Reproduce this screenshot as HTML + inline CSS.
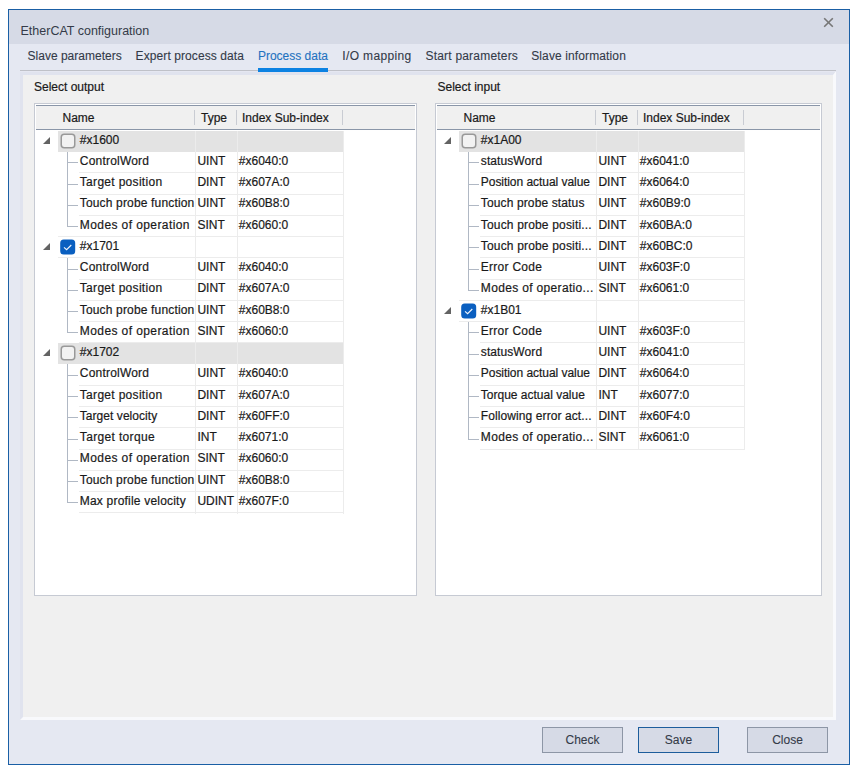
<!DOCTYPE html>
<html><head><meta charset="utf-8"><style>
html,body{margin:0;padding:0;width:860px;height:771px;overflow:hidden;background:#fff}
body{position:relative;font-family:"Liberation Sans", sans-serif}
div{position:absolute}
.t{white-space:nowrap;line-height:16px;-webkit-text-stroke:0.2px currentColor}
svg{display:block}
</style></head><body>
<div style="left:8px;top:9px;width:842px;height:756px;background:#e5e8f2;box-sizing:border-box;border:1px solid #1a5fa5"></div>
<div style="left:9px;top:10px;width:840px;height:34px;background:#d6dae6"></div>
<div class="t" style="left:20.5px;top:22.5px;font-size:12.5px;color:#343a48;-webkit-text-stroke:0">EtherCAT configuration</div>
<svg style="position:absolute;left:822px;top:16px" width="13" height="13" viewBox="0 0 13 13"><path d="M2.2 2.2L10.8 10.8M10.8 2.2L2.2 10.8" stroke="#767676" stroke-width="1.6" fill="none"/></svg>
<div class="t" style="left:27.6px;top:47.6px;font-size:12px;color:#333a48;letter-spacing:0px;-webkit-text-stroke:0.1px currentColor">Slave parameters</div>
<div class="t" style="left:135.6px;top:47.6px;font-size:12px;color:#333a48;letter-spacing:0.09px;-webkit-text-stroke:0.1px currentColor">Expert process data</div>
<div class="t" style="left:257.9px;top:47.6px;font-size:12px;color:#1f72c0;letter-spacing:0px;-webkit-text-stroke:0.1px currentColor">Process data</div>
<div class="t" style="left:342.3px;top:47.6px;font-size:12px;color:#333a48;letter-spacing:0.35px;-webkit-text-stroke:0.1px currentColor">I/O mapping</div>
<div class="t" style="left:425.5px;top:47.6px;font-size:12px;color:#333a48;letter-spacing:0.2px;-webkit-text-stroke:0.1px currentColor">Start parameters</div>
<div class="t" style="left:531.2px;top:47.6px;font-size:12px;color:#333a48;letter-spacing:0.12px;-webkit-text-stroke:0.1px currentColor">Slave information</div>
<div style="left:20px;top:70px;width:816px;height:1px;background:#bfc1c8"></div>
<div style="left:20px;top:71px;width:816px;height:649px;box-sizing:border-box;background:#f0f0f0;border-style:solid;border-width:4px 3px 3px 3px;border-color:#e0e3ee #f8f9fc #f8f9fc #e0e3ee"></div>
<div style="left:20px;top:71px;width:816px;height:1px;background:#e5e7f1"></div>
<div style="left:258px;top:68px;width:70px;height:4px;background:#0c82e2"></div>
<div class="t" style="left:34px;top:79.2px;font-size:12px;color:#1a1a1a;">Select output</div>
<div style="left:34px;top:103px;width:383px;height:493px;box-sizing:border-box;border:1px solid #c6cad3;background:#fff"></div>
<div style="left:36px;top:105px;width:379px;height:1px;background:#8a96a8"></div>
<div style="left:36px;top:106px;width:379px;height:23px;background:#f0f0f0"></div>
<div style="left:36px;top:129px;width:379px;height:1px;background:#8a96a8"></div>
<div style="left:194px;top:110px;width:1px;height:15px;background:#c9ccd3"></div>
<div style="left:236px;top:110px;width:1px;height:15px;background:#c9ccd3"></div>
<div style="left:342px;top:110px;width:1px;height:15px;background:#c9ccd3"></div>
<div class="t" style="left:62.5px;top:109.6px;font-size:12px;color:#1a1a1a;">Name</div>
<div class="t" style="left:201px;top:109.6px;font-size:12px;color:#1a1a1a;">Type</div>
<div class="t" style="left:242px;top:109.6px;font-size:12px;color:#1a1a1a;">Index Sub-index</div>
<div style="left:58px;top:130.5px;width:286px;height:21px;background:#e3e3e3"></div>
<svg style="position:absolute;left:43px;top:136.5px" width="8" height="8" viewBox="0 0 8 8"><path d="M0 7L7 0L7 7Z" fill="#636363"/></svg>
<svg style="position:absolute;left:60px;top:132.5px" width="16" height="16" viewBox="0 0 16 16"><rect x="1.25" y="1.25" width="13.5" height="13.5" rx="3" fill="#f2f2f2" stroke="#999" stroke-width="1.5"/></svg>
<div class="t" style="left:79.8px;top:131.5px;font-size:12px;color:#1a1a1a;">#x1600</div>
<div style="left:79px;top:172.25px;width:265px;height:1px;background:#ececec"></div>
<div style="left:68px;top:162.25px;width:10px;height:1px;background:#b0b8c4"></div>
<div class="t" style="left:79.8px;top:152.75px;font-size:12px;color:#1a1a1a;letter-spacing:0.2px">ControlWord</div>
<div class="t" style="left:197.4px;top:152.75px;font-size:12px;color:#1a1a1a;">UINT</div>
<div class="t" style="left:238.8px;top:152.75px;font-size:12px;color:#1a1a1a;">#x6040:0</div>
<div style="left:79px;top:193.5px;width:265px;height:1px;background:#ececec"></div>
<div style="left:68px;top:183.5px;width:10px;height:1px;background:#b0b8c4"></div>
<div class="t" style="left:79.8px;top:174.0px;font-size:12px;color:#1a1a1a;letter-spacing:0.307px">Target position</div>
<div class="t" style="left:197.4px;top:174.0px;font-size:12px;color:#1a1a1a;">DINT</div>
<div class="t" style="left:238.8px;top:174.0px;font-size:12px;color:#1a1a1a;">#x607A:0</div>
<div style="left:79px;top:214.75px;width:265px;height:1px;background:#ececec"></div>
<div style="left:68px;top:204.75px;width:10px;height:1px;background:#b0b8c4"></div>
<div class="t" style="left:79.8px;top:195.25px;font-size:12px;color:#1a1a1a;letter-spacing:0.158px">Touch probe function</div>
<div class="t" style="left:197.4px;top:195.25px;font-size:12px;color:#1a1a1a;">UINT</div>
<div class="t" style="left:238.8px;top:195.25px;font-size:12px;color:#1a1a1a;">#x60B8:0</div>
<div style="left:79px;top:236.0px;width:265px;height:1px;background:#ececec"></div>
<div style="left:68px;top:226.0px;width:10px;height:1px;background:#b0b8c4"></div>
<div class="t" style="left:79.8px;top:216.5px;font-size:12px;color:#1a1a1a;letter-spacing:0.412px">Modes of operation</div>
<div class="t" style="left:197.4px;top:216.5px;font-size:12px;color:#1a1a1a;">SINT</div>
<div class="t" style="left:238.8px;top:216.5px;font-size:12px;color:#1a1a1a;">#x6060:0</div>
<div style="left:58px;top:236.25px;width:286px;height:1px;background:#ececec"></div>
<div style="left:58px;top:257.25px;width:286px;height:1px;background:#ececec"></div>
<svg style="position:absolute;left:43px;top:242.75px" width="8" height="8" viewBox="0 0 8 8"><path d="M0 7L7 0L7 7Z" fill="#636363"/></svg>
<svg style="position:absolute;left:60px;top:238.75px" width="16" height="16" viewBox="0 0 16 16"><rect x="0.2" y="0.5" width="15" height="15" rx="3.5" fill="#0a5fc0"/><path d="M4 8.4L6.6 10.7L11.3 6" stroke="#f2f6fc" stroke-width="1.1" fill="none"/></svg>
<div class="t" style="left:79.8px;top:237.75px;font-size:12px;color:#1a1a1a;">#x1701</div>
<div style="left:79px;top:278.5px;width:265px;height:1px;background:#ececec"></div>
<div style="left:68px;top:268.5px;width:10px;height:1px;background:#b0b8c4"></div>
<div class="t" style="left:79.8px;top:259.0px;font-size:12px;color:#1a1a1a;letter-spacing:0.2px">ControlWord</div>
<div class="t" style="left:197.4px;top:259.0px;font-size:12px;color:#1a1a1a;">UINT</div>
<div class="t" style="left:238.8px;top:259.0px;font-size:12px;color:#1a1a1a;">#x6040:0</div>
<div style="left:79px;top:299.75px;width:265px;height:1px;background:#ececec"></div>
<div style="left:68px;top:289.75px;width:10px;height:1px;background:#b0b8c4"></div>
<div class="t" style="left:79.8px;top:280.25px;font-size:12px;color:#1a1a1a;letter-spacing:0.307px">Target position</div>
<div class="t" style="left:197.4px;top:280.25px;font-size:12px;color:#1a1a1a;">DINT</div>
<div class="t" style="left:238.8px;top:280.25px;font-size:12px;color:#1a1a1a;">#x607A:0</div>
<div style="left:79px;top:321.0px;width:265px;height:1px;background:#ececec"></div>
<div style="left:68px;top:311.0px;width:10px;height:1px;background:#b0b8c4"></div>
<div class="t" style="left:79.8px;top:301.5px;font-size:12px;color:#1a1a1a;letter-spacing:0.158px">Touch probe function</div>
<div class="t" style="left:197.4px;top:301.5px;font-size:12px;color:#1a1a1a;">UINT</div>
<div class="t" style="left:238.8px;top:301.5px;font-size:12px;color:#1a1a1a;">#x60B8:0</div>
<div style="left:79px;top:342.25px;width:265px;height:1px;background:#ececec"></div>
<div style="left:68px;top:332.25px;width:10px;height:1px;background:#b0b8c4"></div>
<div class="t" style="left:79.8px;top:322.75px;font-size:12px;color:#1a1a1a;letter-spacing:0.412px">Modes of operation</div>
<div class="t" style="left:197.4px;top:322.75px;font-size:12px;color:#1a1a1a;">SINT</div>
<div class="t" style="left:238.8px;top:322.75px;font-size:12px;color:#1a1a1a;">#x6060:0</div>
<div style="left:58px;top:343.0px;width:286px;height:21px;background:#e3e3e3"></div>
<svg style="position:absolute;left:43px;top:349.0px" width="8" height="8" viewBox="0 0 8 8"><path d="M0 7L7 0L7 7Z" fill="#636363"/></svg>
<svg style="position:absolute;left:60px;top:345.0px" width="16" height="16" viewBox="0 0 16 16"><rect x="1.25" y="1.25" width="13.5" height="13.5" rx="3" fill="#f2f2f2" stroke="#999" stroke-width="1.5"/></svg>
<div class="t" style="left:79.8px;top:344.0px;font-size:12px;color:#1a1a1a;">#x1702</div>
<div style="left:79px;top:384.75px;width:265px;height:1px;background:#ececec"></div>
<div style="left:68px;top:374.75px;width:10px;height:1px;background:#b0b8c4"></div>
<div class="t" style="left:79.8px;top:365.25px;font-size:12px;color:#1a1a1a;letter-spacing:0.2px">ControlWord</div>
<div class="t" style="left:197.4px;top:365.25px;font-size:12px;color:#1a1a1a;">UINT</div>
<div class="t" style="left:238.8px;top:365.25px;font-size:12px;color:#1a1a1a;">#x6040:0</div>
<div style="left:79px;top:406.0px;width:265px;height:1px;background:#ececec"></div>
<div style="left:68px;top:396.0px;width:10px;height:1px;background:#b0b8c4"></div>
<div class="t" style="left:79.8px;top:386.5px;font-size:12px;color:#1a1a1a;letter-spacing:0.307px">Target position</div>
<div class="t" style="left:197.4px;top:386.5px;font-size:12px;color:#1a1a1a;">DINT</div>
<div class="t" style="left:238.8px;top:386.5px;font-size:12px;color:#1a1a1a;">#x607A:0</div>
<div style="left:79px;top:427.25px;width:265px;height:1px;background:#ececec"></div>
<div style="left:68px;top:417.25px;width:10px;height:1px;background:#b0b8c4"></div>
<div class="t" style="left:79.8px;top:407.75px;font-size:12px;color:#1a1a1a;letter-spacing:0.05px">Target velocity</div>
<div class="t" style="left:197.4px;top:407.75px;font-size:12px;color:#1a1a1a;">DINT</div>
<div class="t" style="left:238.8px;top:407.75px;font-size:12px;color:#1a1a1a;">#x60FF:0</div>
<div style="left:79px;top:448.5px;width:265px;height:1px;background:#ececec"></div>
<div style="left:68px;top:438.5px;width:10px;height:1px;background:#b0b8c4"></div>
<div class="t" style="left:79.8px;top:429.0px;font-size:12px;color:#1a1a1a;letter-spacing:0.342px">Target torque</div>
<div class="t" style="left:197.4px;top:429.0px;font-size:12px;color:#1a1a1a;">INT</div>
<div class="t" style="left:238.8px;top:429.0px;font-size:12px;color:#1a1a1a;">#x6071:0</div>
<div style="left:79px;top:469.75px;width:265px;height:1px;background:#ececec"></div>
<div style="left:68px;top:459.75px;width:10px;height:1px;background:#b0b8c4"></div>
<div class="t" style="left:79.8px;top:450.25px;font-size:12px;color:#1a1a1a;letter-spacing:0.412px">Modes of operation</div>
<div class="t" style="left:197.4px;top:450.25px;font-size:12px;color:#1a1a1a;">SINT</div>
<div class="t" style="left:238.8px;top:450.25px;font-size:12px;color:#1a1a1a;">#x6060:0</div>
<div style="left:79px;top:491.0px;width:265px;height:1px;background:#ececec"></div>
<div style="left:68px;top:481.0px;width:10px;height:1px;background:#b0b8c4"></div>
<div class="t" style="left:79.8px;top:471.5px;font-size:12px;color:#1a1a1a;letter-spacing:0.158px">Touch probe function</div>
<div class="t" style="left:197.4px;top:471.5px;font-size:12px;color:#1a1a1a;">UINT</div>
<div class="t" style="left:238.8px;top:471.5px;font-size:12px;color:#1a1a1a;">#x60B8:0</div>
<div style="left:79px;top:512.25px;width:265px;height:1px;background:#ececec"></div>
<div style="left:68px;top:502.25px;width:10px;height:1px;background:#b0b8c4"></div>
<div class="t" style="left:79.8px;top:492.75px;font-size:12px;color:#1a1a1a;letter-spacing:0.2px">Max profile velocity</div>
<div class="t" style="left:197.4px;top:492.75px;font-size:12px;color:#1a1a1a;">UDINT</div>
<div class="t" style="left:238.8px;top:492.75px;font-size:12px;color:#1a1a1a;">#x607F:0</div>
<div style="left:195px;top:131px;width:1px;height:382.5px;background:#ececec"></div>
<div style="left:237px;top:131px;width:1px;height:382.5px;background:#ececec"></div>
<div style="left:343px;top:131px;width:1px;height:382.5px;background:#ececec"></div>
<div style="left:67px;top:151.75px;width:1px;height:75.25px;background:#b0b8c4"></div>
<div style="left:67px;top:258.0px;width:1px;height:75.25px;background:#b0b8c4"></div>
<div style="left:67px;top:364.25px;width:1px;height:139.0px;background:#b0b8c4"></div>
<div class="t" style="left:437.5px;top:79.2px;font-size:12px;color:#1a1a1a;">Select input</div>
<div style="left:435px;top:103px;width:387px;height:493px;box-sizing:border-box;border:1px solid #c6cad3;background:#fff"></div>
<div style="left:437px;top:105px;width:383px;height:1px;background:#8a96a8"></div>
<div style="left:437px;top:106px;width:383px;height:23px;background:#f0f0f0"></div>
<div style="left:437px;top:129px;width:383px;height:1px;background:#8a96a8"></div>
<div style="left:595px;top:110px;width:1px;height:15px;background:#c9ccd3"></div>
<div style="left:637px;top:110px;width:1px;height:15px;background:#c9ccd3"></div>
<div style="left:743px;top:110px;width:1px;height:15px;background:#c9ccd3"></div>
<div class="t" style="left:463.5px;top:109.6px;font-size:12px;color:#1a1a1a;">Name</div>
<div class="t" style="left:602px;top:109.6px;font-size:12px;color:#1a1a1a;">Type</div>
<div class="t" style="left:643px;top:109.6px;font-size:12px;color:#1a1a1a;">Index Sub-index</div>
<div style="left:459px;top:130.5px;width:286px;height:21px;background:#e3e3e3"></div>
<svg style="position:absolute;left:444px;top:136.5px" width="8" height="8" viewBox="0 0 8 8"><path d="M0 7L7 0L7 7Z" fill="#636363"/></svg>
<svg style="position:absolute;left:461px;top:132.5px" width="16" height="16" viewBox="0 0 16 16"><rect x="1.25" y="1.25" width="13.5" height="13.5" rx="3" fill="#f2f2f2" stroke="#999" stroke-width="1.5"/></svg>
<div class="t" style="left:480.8px;top:131.5px;font-size:12px;color:#1a1a1a;">#x1A00</div>
<div style="left:480px;top:172.25px;width:265px;height:1px;background:#ececec"></div>
<div style="left:469px;top:162.25px;width:10px;height:1px;background:#b0b8c4"></div>
<div class="t" style="left:480.8px;top:152.75px;font-size:12px;color:#1a1a1a;letter-spacing:0.089px">statusWord</div>
<div class="t" style="left:598.4px;top:152.75px;font-size:12px;color:#1a1a1a;">UINT</div>
<div class="t" style="left:639.8px;top:152.75px;font-size:12px;color:#1a1a1a;">#x6041:0</div>
<div style="left:480px;top:193.5px;width:265px;height:1px;background:#ececec"></div>
<div style="left:469px;top:183.5px;width:10px;height:1px;background:#b0b8c4"></div>
<div class="t" style="left:480.8px;top:174.0px;font-size:12px;color:#1a1a1a;letter-spacing:-0.045px">Position actual value</div>
<div class="t" style="left:598.4px;top:174.0px;font-size:12px;color:#1a1a1a;">DINT</div>
<div class="t" style="left:639.8px;top:174.0px;font-size:12px;color:#1a1a1a;">#x6064:0</div>
<div style="left:480px;top:214.75px;width:265px;height:1px;background:#ececec"></div>
<div style="left:469px;top:204.75px;width:10px;height:1px;background:#b0b8c4"></div>
<div class="t" style="left:480.8px;top:195.25px;font-size:12px;color:#1a1a1a;letter-spacing:0.129px">Touch probe status</div>
<div class="t" style="left:598.4px;top:195.25px;font-size:12px;color:#1a1a1a;">UINT</div>
<div class="t" style="left:639.8px;top:195.25px;font-size:12px;color:#1a1a1a;">#x60B9:0</div>
<div style="left:480px;top:236.0px;width:265px;height:1px;background:#ececec"></div>
<div style="left:469px;top:226.0px;width:10px;height:1px;background:#b0b8c4"></div>
<div class="t" style="left:480.8px;top:216.5px;font-size:12px;color:#1a1a1a;letter-spacing:0.17px">Touch probe positi...</div>
<div class="t" style="left:598.4px;top:216.5px;font-size:12px;color:#1a1a1a;">DINT</div>
<div class="t" style="left:639.8px;top:216.5px;font-size:12px;color:#1a1a1a;">#x60BA:0</div>
<div style="left:480px;top:257.25px;width:265px;height:1px;background:#ececec"></div>
<div style="left:469px;top:247.25px;width:10px;height:1px;background:#b0b8c4"></div>
<div class="t" style="left:480.8px;top:237.75px;font-size:12px;color:#1a1a1a;letter-spacing:0.17px">Touch probe positi...</div>
<div class="t" style="left:598.4px;top:237.75px;font-size:12px;color:#1a1a1a;">DINT</div>
<div class="t" style="left:639.8px;top:237.75px;font-size:12px;color:#1a1a1a;">#x60BC:0</div>
<div style="left:480px;top:278.5px;width:265px;height:1px;background:#ececec"></div>
<div style="left:469px;top:268.5px;width:10px;height:1px;background:#b0b8c4"></div>
<div class="t" style="left:480.8px;top:259.0px;font-size:12px;color:#1a1a1a;letter-spacing:0.267px">Error Code</div>
<div class="t" style="left:598.4px;top:259.0px;font-size:12px;color:#1a1a1a;">UINT</div>
<div class="t" style="left:639.8px;top:259.0px;font-size:12px;color:#1a1a1a;">#x603F:0</div>
<div style="left:480px;top:299.75px;width:265px;height:1px;background:#ececec"></div>
<div style="left:469px;top:289.75px;width:10px;height:1px;background:#b0b8c4"></div>
<div class="t" style="left:480.8px;top:280.25px;font-size:12px;color:#1a1a1a;letter-spacing:0.337px">Modes of operatio...</div>
<div class="t" style="left:598.4px;top:280.25px;font-size:12px;color:#1a1a1a;">SINT</div>
<div class="t" style="left:639.8px;top:280.25px;font-size:12px;color:#1a1a1a;">#x6061:0</div>
<div style="left:459px;top:300.0px;width:286px;height:1px;background:#ececec"></div>
<div style="left:459px;top:321.0px;width:286px;height:1px;background:#ececec"></div>
<svg style="position:absolute;left:444px;top:306.5px" width="8" height="8" viewBox="0 0 8 8"><path d="M0 7L7 0L7 7Z" fill="#636363"/></svg>
<svg style="position:absolute;left:461px;top:302.5px" width="16" height="16" viewBox="0 0 16 16"><rect x="0.2" y="0.5" width="15" height="15" rx="3.5" fill="#0a5fc0"/><path d="M4 8.4L6.6 10.7L11.3 6" stroke="#f2f6fc" stroke-width="1.1" fill="none"/></svg>
<div class="t" style="left:480.8px;top:301.5px;font-size:12px;color:#1a1a1a;">#x1B01</div>
<div style="left:480px;top:342.25px;width:265px;height:1px;background:#ececec"></div>
<div style="left:469px;top:332.25px;width:10px;height:1px;background:#b0b8c4"></div>
<div class="t" style="left:480.8px;top:322.75px;font-size:12px;color:#1a1a1a;letter-spacing:0.267px">Error Code</div>
<div class="t" style="left:598.4px;top:322.75px;font-size:12px;color:#1a1a1a;">UINT</div>
<div class="t" style="left:639.8px;top:322.75px;font-size:12px;color:#1a1a1a;">#x603F:0</div>
<div style="left:480px;top:363.5px;width:265px;height:1px;background:#ececec"></div>
<div style="left:469px;top:353.5px;width:10px;height:1px;background:#b0b8c4"></div>
<div class="t" style="left:480.8px;top:344.0px;font-size:12px;color:#1a1a1a;letter-spacing:0.089px">statusWord</div>
<div class="t" style="left:598.4px;top:344.0px;font-size:12px;color:#1a1a1a;">UINT</div>
<div class="t" style="left:639.8px;top:344.0px;font-size:12px;color:#1a1a1a;">#x6041:0</div>
<div style="left:480px;top:384.75px;width:265px;height:1px;background:#ececec"></div>
<div style="left:469px;top:374.75px;width:10px;height:1px;background:#b0b8c4"></div>
<div class="t" style="left:480.8px;top:365.25px;font-size:12px;color:#1a1a1a;letter-spacing:-0.045px">Position actual value</div>
<div class="t" style="left:598.4px;top:365.25px;font-size:12px;color:#1a1a1a;">DINT</div>
<div class="t" style="left:639.8px;top:365.25px;font-size:12px;color:#1a1a1a;">#x6064:0</div>
<div style="left:480px;top:406.0px;width:265px;height:1px;background:#ececec"></div>
<div style="left:469px;top:396.0px;width:10px;height:1px;background:#b0b8c4"></div>
<div class="t" style="left:480.8px;top:386.5px;font-size:12px;color:#1a1a1a;letter-spacing:0.0px">Torque actual value</div>
<div class="t" style="left:598.4px;top:386.5px;font-size:12px;color:#1a1a1a;">INT</div>
<div class="t" style="left:639.8px;top:386.5px;font-size:12px;color:#1a1a1a;">#x6077:0</div>
<div style="left:480px;top:427.25px;width:265px;height:1px;background:#ececec"></div>
<div style="left:469px;top:417.25px;width:10px;height:1px;background:#b0b8c4"></div>
<div class="t" style="left:480.8px;top:407.75px;font-size:12px;color:#1a1a1a;letter-spacing:0.095px">Following error act...</div>
<div class="t" style="left:598.4px;top:407.75px;font-size:12px;color:#1a1a1a;">DINT</div>
<div class="t" style="left:639.8px;top:407.75px;font-size:12px;color:#1a1a1a;">#x60F4:0</div>
<div style="left:480px;top:448.5px;width:265px;height:1px;background:#ececec"></div>
<div style="left:469px;top:438.5px;width:10px;height:1px;background:#b0b8c4"></div>
<div class="t" style="left:480.8px;top:429.0px;font-size:12px;color:#1a1a1a;letter-spacing:0.337px">Modes of operatio...</div>
<div class="t" style="left:598.4px;top:429.0px;font-size:12px;color:#1a1a1a;">SINT</div>
<div class="t" style="left:639.8px;top:429.0px;font-size:12px;color:#1a1a1a;">#x6061:0</div>
<div style="left:596px;top:131px;width:1px;height:318.75px;background:#ececec"></div>
<div style="left:638px;top:131px;width:1px;height:318.75px;background:#ececec"></div>
<div style="left:744px;top:131px;width:1px;height:318.75px;background:#ececec"></div>
<div style="left:468px;top:151.75px;width:1px;height:139.0px;background:#b0b8c4"></div>
<div style="left:468px;top:321.75px;width:1px;height:117.75px;background:#b0b8c4"></div>
<div style="left:542px;top:727px;width:81px;height:26px;box-sizing:border-box;border:1px solid #8d96a6;background:#d6dae6"></div>
<div class="t" style="left:542px;top:732px;width:81px;text-align:center;font-size:12px;color:#343a48;-webkit-text-stroke:0.1px currentColor">Check</div>
<div style="left:638px;top:727px;width:81px;height:26px;box-sizing:border-box;border:1px solid #1d5d9c;background:#d6dae6"></div>
<div class="t" style="left:638px;top:732px;width:81px;text-align:center;font-size:12px;color:#343a48;-webkit-text-stroke:0.1px currentColor">Save</div>
<div style="left:747px;top:727px;width:81px;height:26px;box-sizing:border-box;border:1px solid #8d96a6;background:#d6dae6"></div>
<div class="t" style="left:747px;top:732px;width:81px;text-align:center;font-size:12px;color:#343a48;-webkit-text-stroke:0.1px currentColor">Close</div>
</body></html>
